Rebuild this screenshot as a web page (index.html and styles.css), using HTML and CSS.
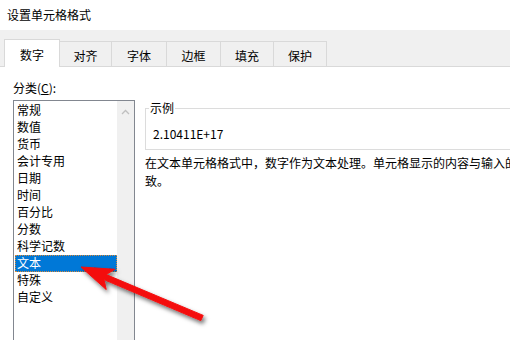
FILE: index.html
```html
<!DOCTYPE html>
<html lang="zh-CN">
<head>
<meta charset="utf-8">
<title>设置单元格格式</title>
<link rel="stylesheet" href="styles.css">
</head>
<body>
<div class="dialog">
  <div class="titlebar">设置单元格格式</div>
  <div class="tabstrip">
    <div class="tab active t1">数字</div>
    <div class="tab t2">对齐</div>
    <div class="tab t3">字体</div>
    <div class="tab t4">边框</div>
    <div class="tab t5">填充</div>
    <div class="tab t6">保护</div>
  </div>
  <div class="content">
    <div class="leftcol">
      <div class="label">分类(<u>C</u>):</div>
      <div class="listbox">
        <ul class="items">
          <li>常规</li>
          <li>数值</li>
          <li>货币</li>
          <li>会计专用</li>
          <li>日期</li>
          <li>时间</li>
          <li>百分比</li>
          <li>分数</li>
          <li>科学记数</li>
          <li class="selected">文本</li>
          <li>特殊</li>
          <li>自定义</li>
        </ul>
        <div class="scrollbar">
          <div class="scrollbtn">
            <svg width="9" height="6" viewBox="0 0 9 6"><path d="M1 5 L4.5 1.5 L8 5" fill="none" stroke="#bfbfbf" stroke-width="1.3"/></svg>
          </div>
        </div>
      </div>
    </div>
    <div class="rightcol">
      <fieldset class="sample">
        <legend>示例</legend>
        <div class="sampletext">2.10411E+17</div>
      </fieldset>
      <p class="desc">在文本单元格格式中，数字作为文本处理。单元格显示的内容与输入的内容完全一致。</p>
    </div>
  </div>
  <svg class="arrow" width="510" height="340" viewBox="0 0 510 340">
    <defs>
      <filter id="sh" x="-20%" y="-20%" width="140%" height="140%">
        <feDropShadow dx="2" dy="3" stdDeviation="2.2" flood-color="#000" flood-opacity="0.55"/>
      </filter>
    </defs>
    <polygon filter="url(#sh)" fill="#f40b0b" stroke="#f40b0b" stroke-width="1" stroke-linejoin="round"
      points="81,267 114.8,269.3 106.2,274.6 203.2,315.4 200.8,320.6 104,279.6 106.2,289.5"/>
  </svg>
</div>
</body>
</html>
```
FILE: styles.css
```css
* { box-sizing: border-box; }
html, body {
  margin: 0;
  padding: 0;
  width: 510px;
  height: 340px;
  overflow: hidden;
  background: #fff;
}
body {
  font-family: "Noto Sans CJK SC", "Noto Sans", sans-serif;
  font-size: 12px;
  color: #000;
}
.dialog {
  position: relative;
  width: 600px;
  height: 340px;
  background: #fff;
}
.titlebar {
  height: 30px;
  line-height: 30px;
  padding-left: 7px;
  background: #fff;
}
.tabstrip {
  height: 37px;
  background: #f0f0f0;
  border-bottom: 1px solid #d9d9d9;
  display: flex;
  align-items: flex-end;
  padding-left: 4px;
}
.tab {
  height: 25px;
  border: 1px solid #d9d9d9;
  border-bottom: none;
  margin-left: -1px;
  text-align: center;
  line-height: 25px;
  padding-top: 1px;
  background: #f0f0f0;
}
.tab.active {
  position: relative;
  z-index: 2;
  height: 28px;
  line-height: 27px;
  margin-left: 0;
  margin-bottom: -1px;
  background: #fff;
}
.t1 { width: 56px; }
.t2 { width: 53px; }
.t3 { width: 56px; }
.t4 { width: 55px; }
.t5 { width: 54px; }
.t6 { width: 54px; }

.content {
  display: flex;
  padding: 12px 0 0 13px;
}
.leftcol {
  width: 122px;
  display: flex;
  flex-direction: column;
}
.label {
  line-height: 18px;
  height: 18px;
}
.label u { text-decoration: underline; text-underline-offset: 1px; }
.listbox {
  margin-top: 3px;
  width: 122px;
  height: 260px;
  border: 1px solid #828790;
  padding: 1px 0 0 1px;
  display: flex;
}
.items {
  list-style: none;
  margin: 0;
  padding: 0;
  width: 102px;
}
.items li {
  height: 17px;
  line-height: 16px;
  padding-left: 2px;
  white-space: nowrap;
}
.items li.selected {
  background: #0078d7;
  color: #fff;
  border: 1px dotted #d98a3a;
  padding-left: 1px;
  line-height: 14px;
}
.scrollbar {
  width: 17px;
  margin-top: -1px;
  background: #f0f0f0;
}
.scrollbtn {
  height: 19px;
  display: flex;
  align-items: center;
  justify-content: center;
  padding-top: 2px;
}
.scrollbtn svg { display: block; }

.rightcol {
  margin-left: 10px;
  padding-top: 21px;
  width: 445px;
}
.sample {
  margin: 0;
  border: 1px solid #dcdcdc;
  padding: 0 0 7px 3px;
  min-width: 0;
}
.sample legend {
  padding: 0 1px;
  line-height: 16px;
  height: 16px;
}
.sampletext {
  margin: 10px 0 0 4px;
  line-height: 16px;
  height: 16px;
}
.desc {
  margin: 4px 0 0 0;
  width: 442px;
  line-height: 18px;
}
.arrow {
  position: absolute;
  left: 0;
  top: 0;
  pointer-events: none;
}
```
